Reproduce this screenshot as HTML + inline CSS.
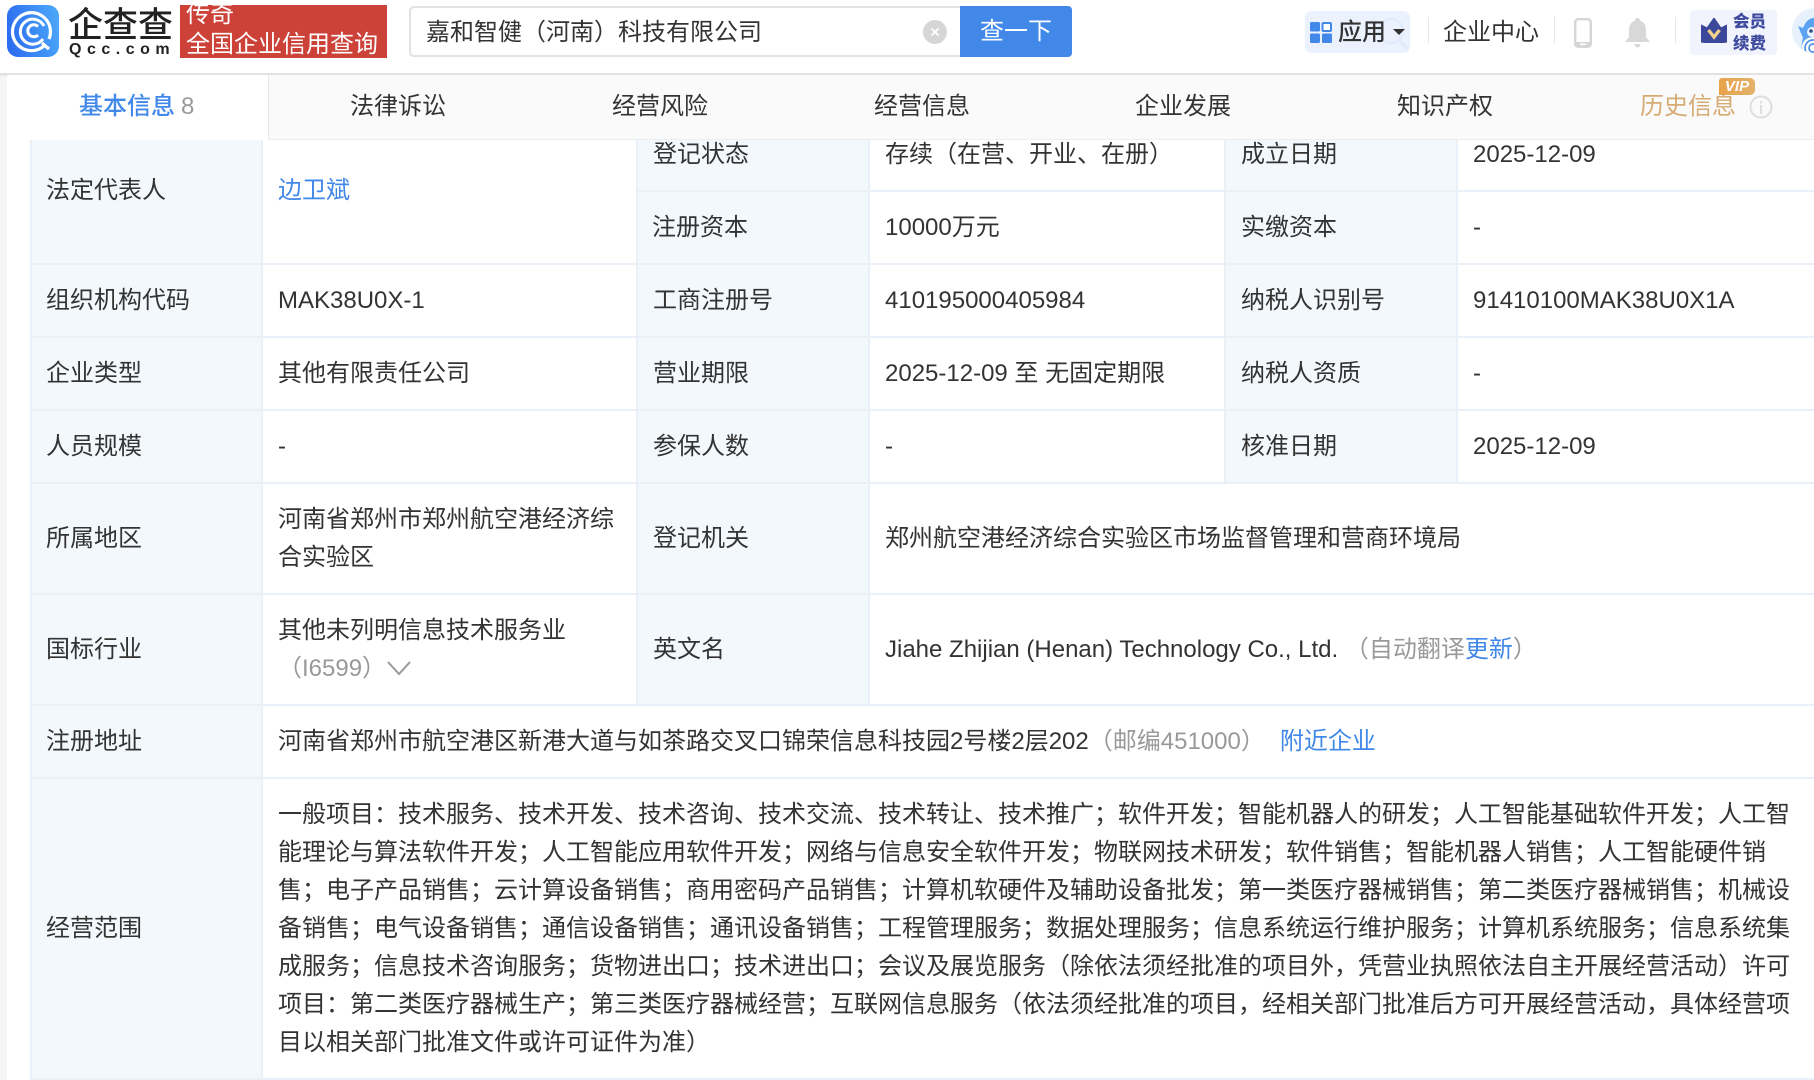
<!DOCTYPE html>
<html lang="zh-CN"><head><meta charset="utf-8"><title>企查查</title>
<style>
*{box-sizing:border-box}
html,body{margin:0;padding:0;width:1814px;height:1080px;overflow:hidden;background:#f6f6f6}
body{font-family:"Liberation Sans","Noto Sans CJK SC",sans-serif;color:#333;font-size:24px}
#w{position:absolute;left:0;top:0;width:1814px;height:1080px;overflow:hidden;filter:blur(.3px)}
.a{position:absolute;white-space:nowrap}
#card{left:7px;top:75px;width:1807px;height:1005px;background:#fff}
#hd{left:0;top:0;width:1814px;height:75px;background:#fff;border-bottom:2px solid #e2e2e2;box-shadow:0 1px 2px rgba(0,0,0,.06)}
#tabs{left:268px;top:75px;width:1546px;height:65px;background:#fafafa;border-bottom:1px solid #eee;border-left:1px solid #e8e8e8;z-index:3}
#tab0{left:7px;top:75px;width:261px;height:65px;background:#fff;z-index:3;border-radius:4px 0 0 0}
.t{top:89px;line-height:36px;z-index:4}
table{position:absolute;left:30px;top:117px;width:1784px;table-layout:fixed;border-collapse:collapse;z-index:1}
td{border:2px solid #e9f0f7;padding:0 0 0 15px;line-height:38px;background:#fff;vertical-align:middle}
td.l{background:#f3f8fd}
tr>td:first-child{padding-left:14px}
table tr>td:last-child{border-right:0}
.g{color:#999}.b{color:#4188e8}
</style></head><body><div id="w">
<div class="a" id="card"></div>
<table>
<colgroup><col style="width:231px"><col style="width:375px"><col style="width:232px"><col style="width:356px"><col style="width:232px"><col style="width:358px"></colgroup>
<tr style="height:73px"><td class="l" rowspan="2">法定代表人</td><td rowspan="2"><span class="b">边卫斌</span></td><td class="l">登记状态</td><td>存续（在营、开业、在册）</td><td class="l">成立日期</td><td>2025-12-09</td></tr>
<tr style="height:73px"><td class="l">注册资本</td><td>10000万元</td><td class="l">实缴资本</td><td>-</td></tr>
<tr style="height:73px"><td class="l">组织机构代码</td><td>MAK38U0X-1</td><td class="l">工商注册号</td><td>410195000405984</td><td class="l">纳税人识别号</td><td>91410100MAK38U0X1A</td></tr>
<tr style="height:73px"><td class="l">企业类型</td><td>其他有限责任公司</td><td class="l">营业期限</td><td>2025-12-09 至 无固定期限</td><td class="l">纳税人资质</td><td>-</td></tr>
<tr style="height:73px"><td class="l">人员规模</td><td>-</td><td class="l">参保人数</td><td>-</td><td class="l">核准日期</td><td>2025-12-09</td></tr>
<tr style="height:111px"><td class="l">所属地区</td><td>河南省郑州市郑州航空港经济综<br>合实验区</td><td class="l">登记机关</td><td colspan="3">郑州航空港经济综合实验区市场监督管理和营商环境局</td></tr>
<tr style="height:111px"><td class="l">国标行业</td><td>其他未列明信息技术服务业<br><span class="g">（I6599）</span></td><td class="l">英文名</td><td colspan="3">Jiahe Zhijian (Henan) Technology Co., Ltd. <span class="g">（自动翻译</span><span class="b">更新</span><span class="g">）</span></td></tr>
<tr style="height:73px"><td class="l">注册地址</td><td colspan="5">河南省郑州市航空港区新港大道与如茶路交叉口锦荣信息科技园2号楼2层202<span class="g">（邮编451000）</span><span class="b" style="margin-left:15px">附近企业</span></td></tr>
<tr style="height:301px"><td class="l">经营范围</td><td colspan="5" style="white-space:nowrap">一般项目：技术服务、技术开发、技术咨询、技术交流、技术转让、技术推广；软件开发；智能机器人的研发；人工智能基础软件开发；人工智<br>能理论与算法软件开发；人工智能应用软件开发；网络与信息安全软件开发；物联网技术研发；软件销售；智能机器人销售；人工智能硬件销<br>售；电子产品销售；云计算设备销售；商用密码产品销售；计算机软硬件及辅助设备批发；第一类医疗器械销售；第二类医疗器械销售；机械设<br>备销售；电气设备销售；通信设备销售；通讯设备销售；工程管理服务；数据处理服务；信息系统运行维护服务；计算机系统服务；信息系统集<br>成服务；信息技术咨询服务；货物进出口；技术进出口；会议及展览服务（除依法须经批准的项目外，凭营业执照依法自主开展经营活动）许可<br>项目：第二类医疗器械生产；第三类医疗器械经营；互联网信息服务（依法须经批准的项目，经相关部门批准后方可开展经营活动，具体经营项<br>目以相关部门批准文件或许可证件为准）</td></tr>
</table>
<svg class="a" style="left:387px;top:660px;z-index:2" width="24" height="16" viewBox="0 0 24 16"><path d="M1 2L12 14L23 2" fill="none" stroke="#999" stroke-width="2"/></svg>

<div class="a" id="tab0"></div><div class="a" id="tabs"></div>
<div class="a t b" style="left:79px;font-weight:500">基本信息</div><div class="a t g" style="left:181px">8</div>
<div class="a t" style="left:350px">法律诉讼</div>
<div class="a t" style="left:612px">经营风险</div>
<div class="a t" style="left:874px">经营信息</div>
<div class="a t" style="left:1135px">企业发展</div>
<div class="a t" style="left:1397px">知识产权</div>
<div class="a t" style="left:1640px;color:#d5ab73">历史信息</div>
<svg class="a" style="left:1749px;top:95px;z-index:4" width="24" height="24" viewBox="0 0 24 24"><circle cx="12" cy="12" r="10.5" fill="none" stroke="#dedede" stroke-width="2"/><rect x="11" y="10" width="2" height="9" fill="#dedede"/><rect x="11" y="6" width="2" height="2.4" fill="#dedede"/></svg>
<div class="a" style="left:1719px;top:78px;width:36px;height:17px;z-index:5;background:linear-gradient(90deg,#e8a24a,#e3b26a);border-radius:3px 5px 5px 0;color:#fff;font:italic bold 15px/17px 'Liberation Sans',sans-serif;text-align:center">VIP</div>

<div class="a" id="hd"></div>
<svg class="a" style="left:7px;top:5px" width="52" height="52" viewBox="0 0 52 52"><defs><linearGradient id="lg" x1="0" y1="0.6" x2="1" y2="0.4"><stop offset="0" stop-color="#2b6cf0"/><stop offset="1" stop-color="#4ba6f8"/></linearGradient></defs><rect width="52" height="52" rx="11" fill="url(#lg)"/><path d="M38 40A19 19 0 1 1 42 34" fill="none" stroke="#fff" stroke-width="3.2"/><path d="M36 34A12.5 12.5 0 1 1 37 21" fill="none" stroke="#fff" stroke-width="3"/><path d="M31 21.5A6 6 0 1 0 31 30" fill="none" stroke="#fff" stroke-width="3"/><path d="M35 38L42 44" stroke="#fff" stroke-width="3.2"/></svg>
<div class="a" style="left:68px;top:1px;font-size:35px;line-height:50px;font-weight:500;color:#222">企查查</div>
<div class="a" style="left:69px;top:41px;font-size:16px;line-height:18px;font-weight:bold;letter-spacing:5.5px;color:#222">Qcc.com</div>
<div class="a" style="left:180px;top:5px;width:207px;height:53px;background:#cc4239;overflow:hidden;color:#fff">
<div class="a" style="left:6px;top:-5px;line-height:30px">传奇</div><div class="a" style="left:6px;top:25px;line-height:30px">全国企业信用查询</div></div>

<div class="a" style="left:409px;top:6px;width:553px;height:51px;background:#fff;border:2px solid #e2e2e2;border-radius:5px 0 0 5px;padding-left:15px;line-height:49px">嘉和智健（河南）科技有限公司</div>
<svg class="a" style="left:923px;top:20px" width="24" height="24" viewBox="0 0 24 24"><circle cx="12" cy="12" r="12" fill="#d6d6d6"/><path d="M8.5 8.5L15.5 15.5M15.5 8.5L8.5 15.5" stroke="#fff" stroke-width="1.8"/></svg>
<div class="a" style="left:960px;top:6px;width:112px;height:51px;background:#4188e8;border-radius:0 4px 4px 0;color:#fff;text-align:center;line-height:52px">查一下</div>

<div class="a" style="left:1305px;top:11px;width:105px;height:42px;background:#ebf2fe;border-radius:6px"></div>
<svg class="a" style="left:1376px;top:16px" width="34" height="36" viewBox="0 0 34 36"><circle cx="15" cy="15" r="12" fill="none" stroke="#e1ebfb" stroke-width="2.5"/><path d="M24 25L32 33" stroke="#e1ebfb" stroke-width="4"/></svg>
<svg class="a" style="left:1310px;top:22px" width="22" height="21" viewBox="0 0 22 21"><rect width="10" height="9.5" rx="1.5" fill="#4188e8"/><rect x="12.5" y="1" width="8.5" height="8" rx="1" fill="#fff" stroke="#4188e8" stroke-width="2"/><rect y="11.5" width="10" height="9.5" rx="1.5" fill="#4188e8"/><rect x="12" y="11.5" width="10" height="9.5" rx="1.5" fill="#4188e8"/></svg>
<div class="a" style="left:1338px;top:15px;line-height:36px;font-weight:500">应用</div>
<div class="a" style="left:1393px;top:29px;border:6px solid transparent;border-top:6px solid #333;border-bottom:0"></div>
<div class="a" style="left:1428px;top:17px;width:1px;height:27px;background:#e6e6e6"></div>
<div class="a" style="left:1443px;top:15px;line-height:36px">企业中心</div>
<div class="a" style="left:1554px;top:17px;width:1px;height:27px;background:#e6e6e6"></div>
<svg class="a" style="left:1574px;top:18px" width="18" height="30" viewBox="0 0 18 30"><rect x="1.2" y="1.2" width="15.6" height="27.6" rx="3" fill="#fff" stroke="#d6d6d6" stroke-width="2.4"/><rect x="1" y="24" width="16" height="5" rx="2" fill="#d6d6d6"/><rect x="6" y="25.5" width="6" height="1.5" fill="#fff"/></svg>
<svg class="a" style="left:1625px;top:18px" width="25" height="30" viewBox="0 0 25 30"><path d="M12.5 0c1.6 0 2.5 1 2.5 2.6C19 4 21 7.500 21 12v7l4 5H0l4-5v-7c0-4.500 2-8 6-9.400C10 1 10.900 0 12.500 0z" fill="#d8d8d8"/><path d="M9.500 26h6c0 2-1.300 3.500-3 3.500S9.500 28 9.500 26z" fill="#d8d8d8"/></svg>
<div class="a" style="left:1675px;top:17px;width:1px;height:27px;background:#e6e6e6"></div>
<div class="a" style="left:1690px;top:10px;width:87px;height:45px;background:#f1f3fd;border-radius:4px"></div>
<svg class="a" style="left:1701px;top:18px" width="26" height="25" viewBox="0 0 26 25"><path d="M0 7L6 10L13 0L20 10L26 7V24Q13 26 0 24Z" fill="#3b4799" stroke="#3b4799" stroke-linejoin="round"/><path d="M7.500 12L13 19L18.500 12" fill="none" stroke="#f2cf8b" stroke-width="3.400"/></svg>
<div class="a" style="left:1732px;top:11px;width:34px;font-size:16.500px;line-height:22px;font-weight:900;color:#3f4b9e;text-align:right;white-space:normal">会员<br>续费</div>
<svg class="a" style="left:1792px;top:8px" width="22" height="46" viewBox="0 0 22 46"><defs><clipPath id="ac"><circle cx="22.500" cy="22.500" r="22.500"/></clipPath></defs><circle cx="22.500" cy="22.500" r="22.500" fill="#e6f1fc"/><g clip-path="url(#ac)"><path d="M6 18L11 20Q15 10 22 10V46H10Q9 36 11 30Z" fill="#5da2f1"/><ellipse cx="20" cy="24" rx="5" ry="5" fill="#eaf4fe"/><circle cx="19" cy="23" r="1.800" fill="#2d4d80"/><ellipse cx="21" cy="39" rx="11" ry="10" fill="#fff"/><circle cx="21" cy="40" r="8" fill="none" stroke="#4a90e8" stroke-width="1.700"/><circle cx="21" cy="40" r="4" fill="none" stroke="#4a90e8" stroke-width="1.700"/></g></svg>
</div></body></html>
